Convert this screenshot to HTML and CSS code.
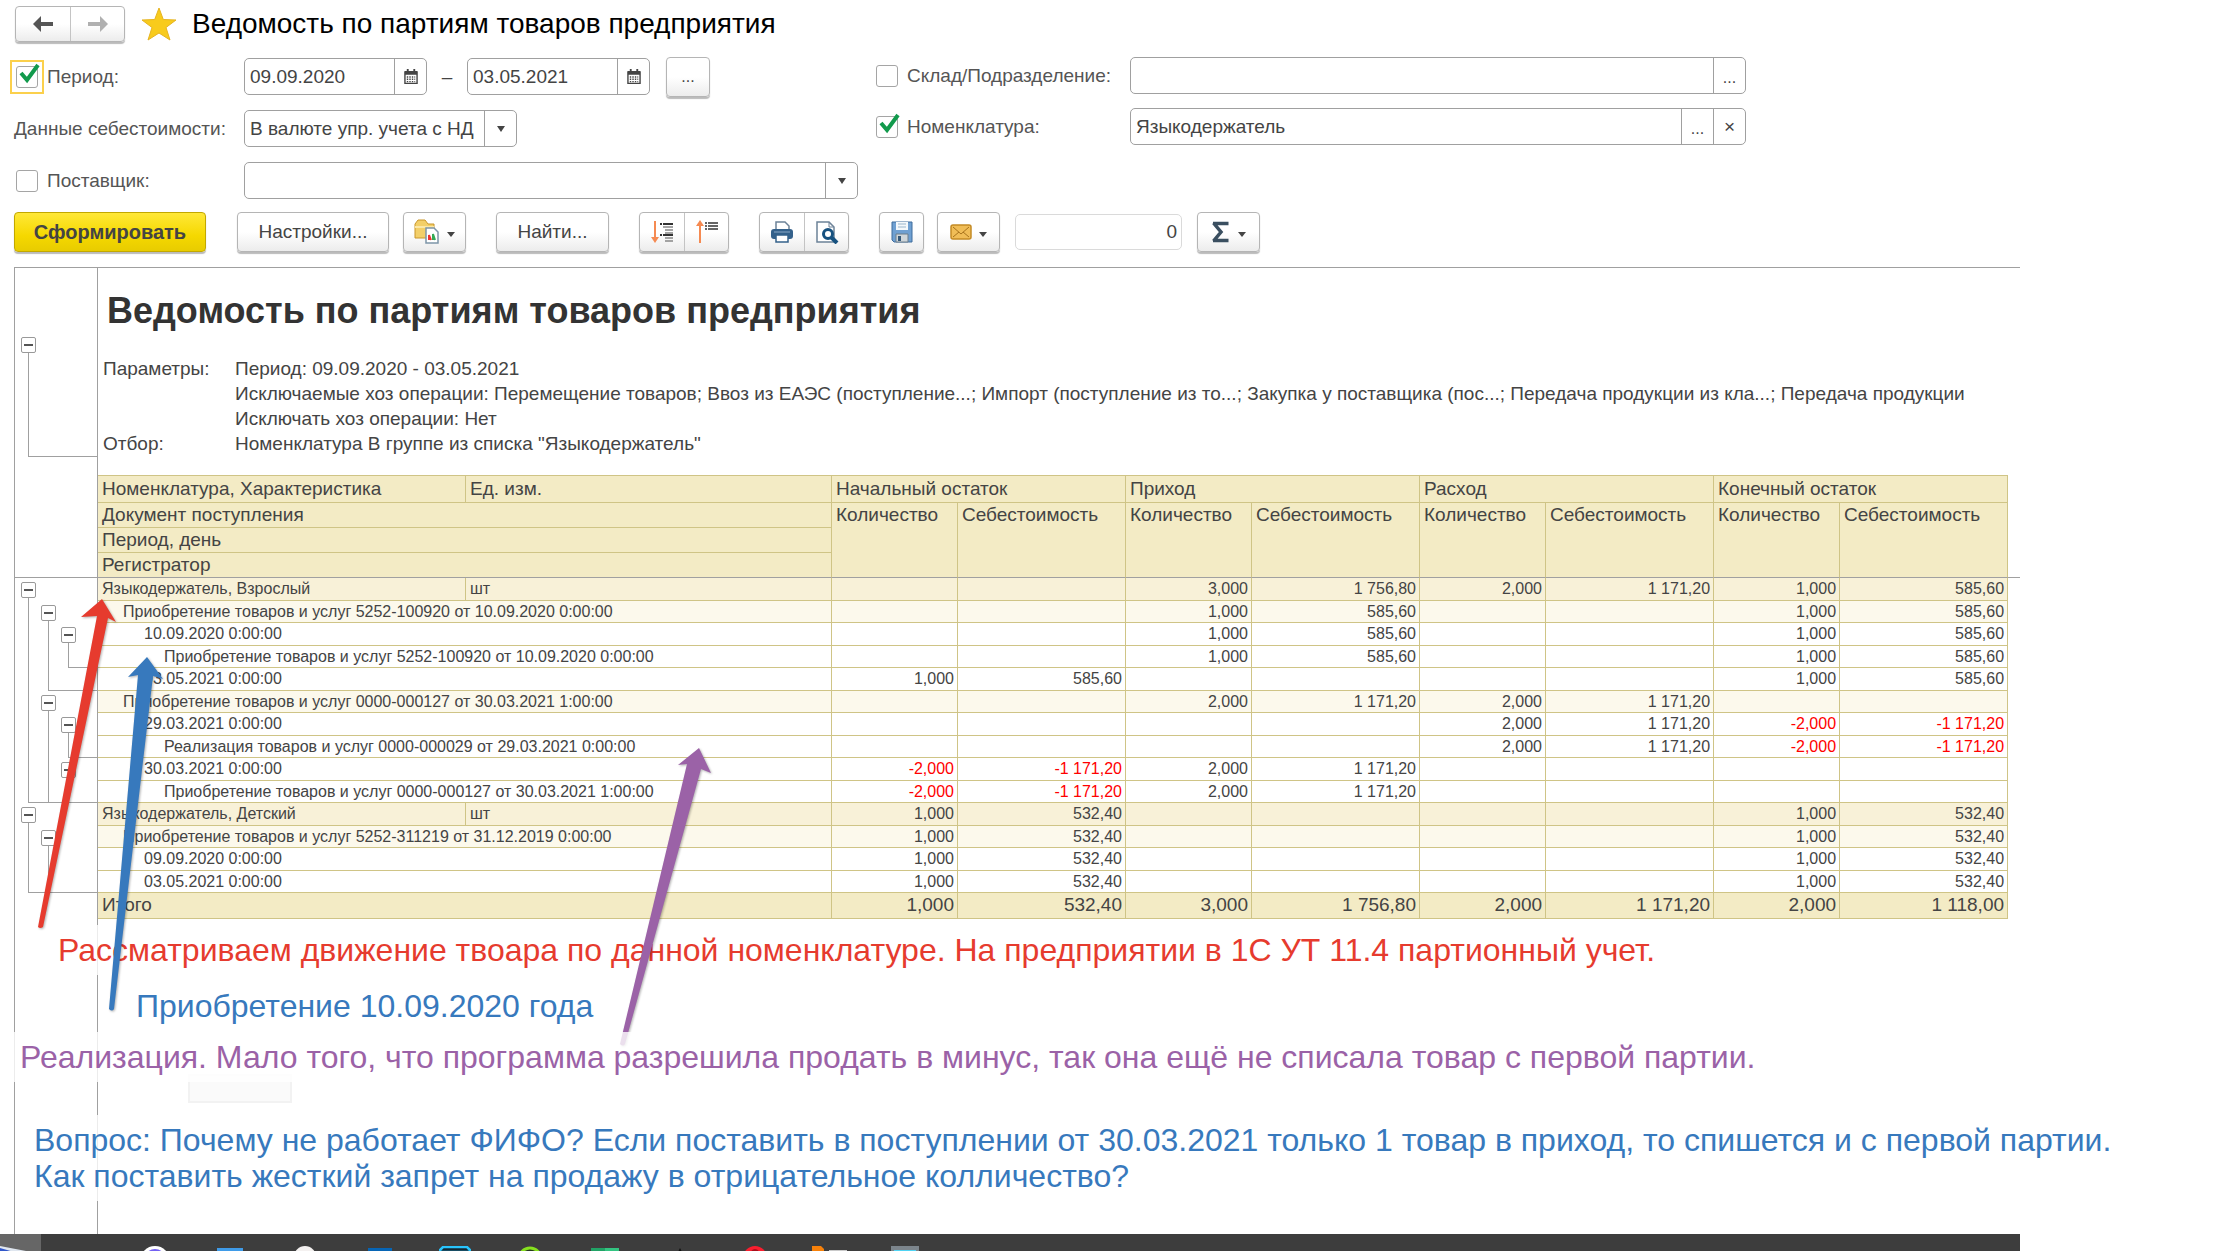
FILE: index.html
```html
<!DOCTYPE html>
<html lang="ru">
<head>
<meta charset="utf-8">
<title>Ведомость по партиям товаров предприятия</title>
<link rel="stylesheet" href="styles.css">
</head>
<body>
<main class="app">
  <header class="head">
    <div class="group">
      <button class="nav" type="button" aria-label="Назад"><svg width="22" height="18" viewBox="0 0 22 18"><path d="M1 9 9 1v6h12v4H9v6z" fill="#555"/></svg></button>
      <button class="nav" type="button" aria-label="Вперед"><svg width="22" height="18" viewBox="0 0 22 18"><path d="M21 9 13 1v6H1v4h12v6z" fill="#b0b0b0"/></svg></button>
    </div>
    <svg class="star" width="36" height="34" viewBox="0 0 36 34"><path d="M18 1 22.300 12.500 35 13 25 20.500 29 33 18 26 7 33 11 20.500 1 13 13.700 12.500z" fill="#f8cb1c" stroke="#e6b422"/></svg>
    <h1 class="title">Ведомость по партиям товаров предприятия</h1>
  </header>

  <form class="filters">
    <div class="col col-left">
      <div class="row">
        <span class="tick focus"><input type="checkbox" id="period" checked></span>
        <label class="lab lab-period" for="period">Период:</label>
        <span class="field date"><input type="text" aria-label="Начало периода" value="09.09.2020"><button type="button" class="part" aria-label="Календарь"><svg width="14" height="15" viewBox="0 0 15 16"><path d="M1 3h13v12.500H1z" fill="#fff" stroke="#444" stroke-width="1.500"/><path d="M1 2h13v4H1zM3 0h2v3H3zM10 0h2v3h-2z" fill="#444"/><path d="M3 8.500h9M3 11h9M3 13.500h9" stroke="#444" stroke-width="1.500" stroke-dasharray="1.500 1.200"/></svg></button></span>
        <span class="dash">–</span>
        <span class="field date"><input type="text" aria-label="Конец периода" value="03.05.2021"><button type="button" class="part" aria-label="Календарь"><svg width="14" height="15" viewBox="0 0 15 16"><path d="M1 3h13v12.500H1z" fill="#fff" stroke="#444" stroke-width="1.500"/><path d="M1 2h13v4H1zM3 0h2v3H3zM10 0h2v3h-2z" fill="#444"/><path d="M3 8.500h9M3 11h9M3 13.500h9" stroke="#444" stroke-width="1.500" stroke-dasharray="1.500 1.200"/></svg></button></span>
        <button class="btn more" type="button">...</button>
      </div>
      <div class="row">
        <label class="lab lab-wide" for="cost">Данные себестоимости:</label>
        <span class="field cost"><select id="cost"><option>В валюте упр. учета с НД</option></select><span class="part"><svg width="8" height="6" viewBox="0 0 8 6"><path d="M0 0h8L4 6z" fill="#444"/></svg></span></span>
      </div>
      <div class="row">
        <span class="tick"><input type="checkbox" id="supplier"></span>
        <label class="lab lab-period" for="supplier">Поставщик:</label>
        <span class="field supplier"><input type="text" aria-label="Поставщик"><button type="button" class="part" aria-label="Выбрать"><svg width="8" height="6" viewBox="0 0 8 6"><path d="M0 0h8L4 6z" fill="#444"/></svg></button></span>
      </div>
    </div>
    <div class="col">
      <div class="row">
        <span class="tick"><input type="checkbox" id="store"></span>
        <label class="lab lab-store" for="store">Склад/Подразделение:</label>
        <span class="field long"><input type="text" aria-label="Склад/Подразделение"><button type="button" class="part dots">...</button></span>
      </div>
      <div class="row">
        <span class="tick"><input type="checkbox" id="item" checked></span>
        <label class="lab lab-store" for="item">Номенклатура:</label>
        <span class="field long"><input type="text" aria-label="Номенклатура" value="Языкодержатель"><button type="button" class="part dots">...</button><button type="button" class="part">×</button></span>
      </div>
    </div>
  </form>

  <div class="toolbar">
    <button class="btn primary" type="button">Сформировать</button>
    <button class="btn settings" type="button">Настройки...</button>
    <button class="btn menu" type="button" aria-label="Варианты отчета"><svg width="26" height="26" viewBox="0 0 26 26"><path d="M1 5 4 1h7l3 4h6v14H1z" fill="#f3cf69" stroke="#c9962b"/><path d="M1 8h19" stroke="#fbe7a6" stroke-width="2"/><path d="M12 9h8l4 4v11H12z" fill="#fff" stroke="#7d95a8" stroke-width="1.500"/><path d="M15 21v-5l2 5" stroke="#e33" stroke-width="2" fill="none"/><path d="M19 21v-6l2 6" stroke="#3a5" stroke-width="2" fill="none"/></svg><svg width="8" height="5" viewBox="0 0 8 5"><path d="M0 0h8L4 5z" fill="#444"/></svg></button>
    <button class="btn find" type="button">Найти...</button>
    <div class="group pair">
      <button type="button" aria-label="Развернуть"><svg width="24" height="24" viewBox="0 0 24 24"><path d="M5 1v19" stroke="#f58a52" stroke-width="2"/><path d="M1 17h8l-4 6z" fill="#f58a52"/><g stroke="#333" stroke-width="2"><path d="M10 4h2M13 4h10M10 15h2M13 15h10"/><path d="M13 7h10M15 10h8M15 13h8M15 18h8M15 21h8" stroke="#888" stroke-width="1.500"/></g></svg></button>
      <button type="button" aria-label="Свернуть"><svg width="24" height="24" viewBox="0 0 24 24"><path d="M5 4v19" stroke="#f58a52" stroke-width="2"/><path d="M1 6h8L5 0z" fill="#f58a52"/><path d="M10 3h2M13 3h10M10 6h2M13 6h10M10 9h2M13 9h10" stroke="#333" stroke-width="1.500"/></svg></button>
    </div>
    <div class="group pair">
      <button type="button" aria-label="Печать"><svg width="24" height="24" viewBox="0 0 24 24"><path d="M6 10V2h9l4 4v4" fill="#fff" stroke="#6c8298" stroke-width="1.500"/><rect x="1" y="9" width="22" height="10" rx="3" fill="#34618b"/><path d="M4 12h16" stroke="#89a9c6"/><path d="M6 15h12v7H6z" fill="#fff" stroke="#34618b" stroke-width="1.500"/></svg></button>
      <button type="button" aria-label="Просмотр"><svg width="24" height="24" viewBox="0 0 24 24"><path d="M2 2h12l5 5v15H2z" fill="#fff" stroke="#6c8298" stroke-width="1.500"/><path d="M14 2v5h5" fill="none" stroke="#6c8298"/><circle cx="13" cy="14" r="4.500" fill="#fff" stroke="#16517f" stroke-width="3"/><path d="m16 17 6 6" stroke="#16517f" stroke-width="4"/></svg></button>
    </div>
    <button class="btn icon" type="button" aria-label="Сохранить"><svg width="22" height="22" viewBox="0 0 22 22"><path d="M1 1h20v20H3l-2-2z" fill="#6fa0d2" stroke="#3f6c9c"/><path d="M5 1h12v8H5z" fill="#f4f8fb"/><path d="M7 3h8M7 6h8" stroke="#9bb6cc"/><path d="M5 13h12v8H5z" fill="#cfd6da" stroke="#6d7f8d"/><path d="M7 15h3v5H7z" fill="#35597a"/></svg></button>
    <button class="btn menu" type="button" aria-label="Отправить"><svg width="22" height="16" viewBox="0 0 22 16"><rect x="1" y="1" width="20" height="14" rx="2" fill="#f0bd57" stroke="#c48a25" stroke-width="1.500"/><path d="m3 3 8 7 8-7M3 13l6-5M19 13l-6-5" fill="none" stroke="#a8731c"/></svg><svg width="8" height="5" viewBox="0 0 8 5"><path d="M0 0h8L4 5z" fill="#444"/></svg></button>
    <input class="sum" type="text" aria-label="Сумма" value="0">
    <button class="btn menu" type="button" aria-label="Функция"><svg width="20" height="22" viewBox="0 0 20 22"><path d="M2 2.500h15.500M2.500 2 10 11l-7.500 9M2 19.500h15.500" fill="none" stroke="#3a4f60" stroke-width="3.500"/></svg><svg width="8" height="5" viewBox="0 0 8 5"><path d="M0 0h8L4 5z" fill="#444"/></svg></button>
  </div>

  <section class="report">
    <div class="report-head">
      <div class="gutter"><button class="toggle" type="button" aria-label="Свернуть"></button><div class="bracket"></div></div>
      <div class="report-info">
        <h2 class="report-title">Ведомость по партиям товаров предприятия</h2>
        <dl class="params">
          <dt>Параметры:</dt><dd>Период: 09.09.2020 - 03.05.2021</dd>
          <dt></dt><dd>Исключаемые хоз операции: Перемещение товаров; Ввоз из ЕАЭС (поступление...; Импорт (поступление из то...; Закупка у поставщика (пос...; Передача продукции из кла...; Передача продукции</dd>
          <dt></dt><dd>Исключать хоз операции: Нет</dd>
          <dt>Отбор:</dt><dd>Номенклатура В группе из списка "Языкодержатель"</dd>
        </dl>
      </div>
    </div>

    <table class="grid">
      <colgroup><col class="c-tree"><col class="c-name"><col class="c-unit"><col class="c-qty"><col class="c-sum"><col class="c-qty"><col class="c-sum"><col class="c-qty"><col class="c-sum"><col class="c-qty"><col class="c-sum"><col></colgroup>
      <thead>
        <tr><td class="side" rowspan="4"></td><th>Номенклатура, Характеристика</th><th>Ед. изм.</th><th colspan="2">Начальный остаток</th><th colspan="2">Приход</th><th colspan="2">Расход</th><th colspan="2">Конечный остаток</th><td class="rest" rowspan="4"></td></tr>
        <tr><th colspan="2">Документ поступления</th><th rowspan="3">Количество</th><th rowspan="3">Себестоимость</th><th rowspan="3">Количество</th><th rowspan="3">Себестоимость</th><th rowspan="3">Количество</th><th rowspan="3">Себестоимость</th><th rowspan="3">Количество</th><th rowspan="3">Себестоимость</th></tr>
        <tr><th colspan="2">Период, день</th></tr>
        <tr><th colspan="2">Регистратор</th></tr>
      </thead>
      <tbody>
        <tr class="g0"><td class="side"><div class="tree"><i class="b"><button class="toggle" type="button" aria-label="Свернуть"></button></i></div></td><td>Языкодержатель, Взрослый</td><td>шт</td><td></td><td></td><td>3,000</td><td>1 756,80</td><td>2,000</td><td>1 171,20</td><td>1,000</td><td>585,60</td></tr>
        <tr class="g1"><td class="side"><div class="tree"><i class="l"></i><i class="b"><button class="toggle" type="button" aria-label="Свернуть"></button></i></div></td><td colspan="2">Приобретение товаров и услуг 5252-100920 от 10.09.2020 0:00:00</td><td></td><td></td><td>1,000</td><td>585,60</td><td></td><td></td><td>1,000</td><td>585,60</td></tr>
        <tr class="g2"><td class="side"><div class="tree"><i class="l"></i><i class="l"></i><i class="b"><button class="toggle" type="button" aria-label="Свернуть"></button></i></div></td><td colspan="2">10.09.2020 0:00:00</td><td></td><td></td><td>1,000</td><td>585,60</td><td></td><td></td><td>1,000</td><td>585,60</td></tr>
        <tr class="g3"><td class="side"><div class="tree"><i class="l"></i><i class="l"></i><i class="e"></i></div></td><td colspan="2">Приобретение товаров и услуг 5252-100920 от 10.09.2020 0:00:00</td><td></td><td></td><td>1,000</td><td>585,60</td><td></td><td></td><td>1,000</td><td>585,60</td></tr>
        <tr class="g2"><td class="side"><div class="tree"><i class="l"></i><i class="e"></i></div></td><td colspan="2">03.05.2021 0:00:00</td><td>1,000</td><td>585,60</td><td></td><td></td><td></td><td></td><td>1,000</td><td>585,60</td></tr>
        <tr class="g1"><td class="side"><div class="tree"><i class="l"></i><i class="b"><button class="toggle" type="button" aria-label="Свернуть"></button></i></div></td><td colspan="2">Приобретение товаров и услуг 0000-000127 от 30.03.2021 1:00:00</td><td></td><td></td><td>2,000</td><td>1 171,20</td><td>2,000</td><td>1 171,20</td><td></td><td></td></tr>
        <tr class="g2"><td class="side"><div class="tree"><i class="l"></i><i class="l"></i><i class="b"><button class="toggle" type="button" aria-label="Свернуть"></button></i></div></td><td colspan="2">29.03.2021 0:00:00</td><td></td><td></td><td></td><td></td><td>2,000</td><td>1 171,20</td><td class="neg">-2,000</td><td class="neg">-1 171,20</td></tr>
        <tr class="g3"><td class="side"><div class="tree"><i class="l"></i><i class="l"></i><i class="e"></i></div></td><td colspan="2">Реализация товаров и услуг 0000-000029 от 29.03.2021 0:00:00</td><td></td><td></td><td></td><td></td><td>2,000</td><td>1 171,20</td><td class="neg">-2,000</td><td class="neg">-1 171,20</td></tr>
        <tr class="g2"><td class="side"><div class="tree"><i class="l"></i><i class="l"></i><i class="b"><button class="toggle" type="button" aria-label="Свернуть"></button></i></div></td><td colspan="2">30.03.2021 0:00:00</td><td class="neg">-2,000</td><td class="neg">-1 171,20</td><td>2,000</td><td>1 171,20</td><td></td><td></td><td></td><td></td></tr>
        <tr class="g3"><td class="side"><div class="tree"><i class="e"></i><i class="e"></i><i class="e"></i></div></td><td colspan="2">Приобретение товаров и услуг 0000-000127 от 30.03.2021 1:00:00</td><td class="neg">-2,000</td><td class="neg">-1 171,20</td><td>2,000</td><td>1 171,20</td><td></td><td></td><td></td><td></td></tr>
        <tr class="g0"><td class="side"><div class="tree"><i class="b"><button class="toggle" type="button" aria-label="Свернуть"></button></i></div></td><td>Языкодержатель, Детский</td><td>шт</td><td>1,000</td><td>532,40</td><td></td><td></td><td></td><td></td><td>1,000</td><td>532,40</td></tr>
        <tr class="g1"><td class="side"><div class="tree"><i class="l"></i><i class="b"><button class="toggle" type="button" aria-label="Свернуть"></button></i></div></td><td colspan="2">Приобретение товаров и услуг 5252-311219 от 31.12.2019 0:00:00</td><td>1,000</td><td>532,40</td><td></td><td></td><td></td><td></td><td>1,000</td><td>532,40</td></tr>
        <tr class="g2"><td class="side"><div class="tree"><i class="l"></i><i class="l"></i></div></td><td colspan="2">09.09.2020 0:00:00</td><td>1,000</td><td>532,40</td><td></td><td></td><td></td><td></td><td>1,000</td><td>532,40</td></tr>
        <tr class="g2"><td class="side"><div class="tree"><i class="e"></i><i class="e"></i></div></td><td colspan="2">03.05.2021 0:00:00</td><td>1,000</td><td>532,40</td><td></td><td></td><td></td><td></td><td>1,000</td><td>532,40</td></tr>
      </tbody>
      <tfoot>
        <tr><td class="side"></td><td colspan="2">Итого</td><td>1,000</td><td>532,40</td><td>3,000</td><td>1 756,80</td><td>2,000</td><td>1 171,20</td><td>2,000</td><td>1 118,00</td></tr>
      </tfoot>
    </table>
    <div class="gutter tail"></div>
  </section>

  <footer class="taskbar">
    <span class="task active"><svg width="28" height="6" viewBox="0 0 28 6"><path d="M0 0 26 5v1H0z" fill="#dfe6ef"/><path d="M0 2 14 6H0z" fill="#3157c9"/></svg></span>
    <span class="task"><svg width="30" height="6" viewBox="0 0 30 6"><circle cx="15" cy="15" r="15" fill="#fff"/><circle cx="15" cy="14" r="11" fill="#7360f2"/></svg></span>
    <span class="task"><svg width="26" height="6" viewBox="0 0 26 6"><path d="M0 2h26v4H0z" fill="#3f9be8"/></svg></span>
    <span class="task"><svg width="22" height="6" viewBox="0 0 22 6"><circle cx="11" cy="11" r="11" fill="#f4f1f0"/></svg></span>
    <span class="task"><svg width="24" height="6" viewBox="0 0 24 6"><path d="M0 2h24v4H0z" fill="#0765b5"/></svg></span>
    <span class="task"><svg width="32" height="6" viewBox="0 0 32 6"><path d="M1 6V4l3-3h24l3 3v2z" fill="#132630" stroke="#28c3fb" stroke-width="2.500"/></svg></span>
    <span class="task"><svg width="26" height="6" viewBox="0 0 26 6"><circle cx="13" cy="13" r="11" fill="#26391a" stroke="#86e01e" stroke-width="3"/></svg></span>
    <span class="task"><svg width="28" height="6" viewBox="0 0 28 6"><path d="M0 2h14v4H0z" fill="#21a366"/><path d="M14 2h14v4H14z" fill="#33c481"/></svg></span>
    <span class="task"><svg width="8" height="6" viewBox="0 0 8 6"><path d="m4 2 2 4H2z" fill="#111"/></svg></span>
    <span class="task"><svg width="24" height="6" viewBox="0 0 24 6"><circle cx="12" cy="12" r="12" fill="#fa1e2f"/><ellipse cx="12" cy="12" rx="6" ry="9" fill="#a7101c"/></svg></span>
    <span class="task"><svg width="36" height="6" viewBox="0 0 36 6"><path d="M0 0h9l3 3v3H0z" fill="#f7810a"/><path d="M17 4h18v2H17z" fill="#c9c9c9"/></svg></span>
    <span class="task"><svg width="28" height="6" viewBox="0 0 28 6"><path d="M0 0h28v6H0z" fill="#7c858c"/><path d="M3 4h22v2H3z" fill="#4fd3f3"/></svg></span>
  </footer>
</main>

<div class="ghost"></div>
<p class="note note-red">Рассматриваем движение твоара по данной номенклатуре. На предприятии в 1С УТ 11.4 партионный учет.</p>
<p class="note note-buy">Приобретение 10.09.2020 года</p>
<svg class="arrows" width="730" height="1060" viewBox="0 0 730 1060">
  <path d="M102 599 116 622 108 618 43 927q-3 2-5 0L97 616 81 617z" fill="#e63b2e"/>
  <path d="M147 657 163 679 153 676 114 1009q-2 3-5 0L138 675 128 677z" fill="#3779bd"/>
  <path d="M699 748 711 773 701 769 625 1044q-2 3-5 0L687 764 678 765z" fill="#9b62a7"/>
</svg>
<p class="note note-sale">Реализация. Мало того, что программа разрешила продать в минус, так она ещё не списала товар с первой партии.</p>
<p class="note note-ask">Вопрос: Почему не работает ФИФО? Если поставить в поступлении от 30.03.2021 только 1 товар в приход, то спишется и с первой партии.<br>Как поставить жесткий запрет на продажу в отрицательное колличество?</p>
</body>
</html>
```
FILE: styles.css
```css
* { box-sizing: border-box; }
body { margin: 0; position: relative; background: #fff; color: #444; font: 19px/24px "Liberation Sans", Arial, sans-serif; }
h1, h2, p, dl, dd { margin: 0; }
button, input, select { font: inherit; color: inherit; margin: 0; padding: 0; border: 0; background: none; }
svg { display: block; flex: none; }

.app { margin-right: 194px; min-height: 100vh; display: flex; flex-direction: column; }

.head { display: flex; align-items: center; height: 48px; padding-left: 15px; }
.star { margin: 0 15px 0 16px; }
.title { color: #000; font-size: 28px; font-weight: 400; line-height: 32px; white-space: nowrap; }

.group, .btn { border: 1px solid #b5b5b5; border-radius: 4px; background: linear-gradient(#fff 50%, #ececec); box-shadow: 0 2px 1px #bbb; }
.group { display: flex; }
.group button { display: flex; align-items: center; justify-content: center; }
.group button + button { border-left: 1px solid #c4c4c4; }
.nav { width: 54px; height: 34px; }
.btn { display: flex; align-items: center; justify-content: center; height: 40px; }

.filters { display: flex; padding: 9px 0 13px; gap: 17px; }
.col { display: flex; flex-direction: column; gap: 14px; }
.col-left { width: 858px; padding-top: 1px; gap: 15px; }
.row { display: flex; align-items: center; height: 37px; white-space: nowrap; }
.col-left .row { padding-left: 10px; }
.tick { display: flex; width: 34px; height: 34px; align-items: center; justify-content: center; }
.col:last-child .tick { width: 23px; }
.focus { border: 2px solid #fbd04c; }
.tick input { appearance: none; position: relative; width: 22px; height: 22px; border: 1px solid #a5a5a5; border-radius: 3px; background: #fff; }
.tick input:checked::after { content: ""; position: absolute; left: 2px; top: -4px; width: 21px; height: 21px; background: url("data:image/svg+xml,%3Csvg xmlns='http://www.w3.org/2000/svg' viewBox='0 0 21 21'%3E%3Cpath d='M2 10l6 7L19 2' fill='none' stroke='%23129a4c' stroke-width='4'/%3E%3C/svg%3E"); }
.lab { color: #555; }
.lab-period { width: 200px; padding-left: 3px; }
.lab-wide { width: 234px; padding-left: 4px; }
.lab-store { width: 232px; padding-left: 9px; }
.field { display: flex; height: 37px; border: 1px solid #a0a0a0; border-radius: 5px; background: #fff; overflow: hidden; }
.field input, .field select { flex: 1; min-width: 0; padding-left: 5px; appearance: none; outline: 0; }
.part { display: flex; width: 32px; align-items: center; justify-content: center; border-left: 1px solid #a0a0a0; }
.dots { font-size: 16px; padding-top: 5px; }
.date { width: 183px; }
.dash { width: 40px; text-align: center; }
.cost { width: 273px; }
.supplier { width: 614px; }
.long { width: 616px; }
.more { width: 44px; margin-left: 16px; font-size: 16px; }

.toolbar { display: flex; align-items: center; height: 40px; padding-left: 14px; margin-bottom: 15px; white-space: nowrap; }
.primary { width: 192px; margin-right: 31px; border-color: #c2a800; background: linear-gradient(#ffe838, #f5d800 60%, #e8cc00); font-size: 20px; font-weight: 700; }
.settings { width: 152px; margin-right: 14px; }
.menu { width: 63px; gap: 7px; }
.menu svg + svg { margin-top: 5px; }
.find { width: 113px; margin: 0 30px; }
.pair { height: 40px; margin-right: 30px; }
.pair button { width: 44px; }
.icon { width: 45px; margin-right: 13px; }
.sum { width: 167px; height: 36px; margin: 0 15px; padding-right: 4px; border: 1px solid #dadada; border-radius: 5px; text-align: right; }

.report { flex: 1; display: flex; flex-direction: column; margin-left: 14px; border-top: 1px solid #a0a0a0; border-left: 1px solid #a0a0a0; }
.report-head { display: flex; height: 207px; }
.gutter { flex: none; width: 83px; border-right: 1px solid #a0a0a0; }
.report-head .gutter { padding: 69px 0 0 6px; }
.bracket { height: 104px; margin-left: 7px; border-left: 1px solid #a0a0a0; border-bottom: 1px solid #a0a0a0; }
.tail { flex: 1; }
.toggle { display: block; position: relative; width: 15px; height: 16px; border: 1px solid #999; border-radius: 2px; background: #fff; }
.toggle::before { content: ""; position: absolute; left: 2px; top: 6px; width: 9px; height: 2px; background: #555; }
.report-info { flex: 1; min-width: 0; padding: 22px 0 0 5px; }
.report-title { padding-left: 4px; color: #333; font-size: 36px; line-height: 42px; white-space: nowrap; }
.params { display: grid; grid-template-columns: 132px 1fr; margin-top: 24px; line-height: 25px; grid-auto-rows: 25px; }
.params dd { overflow: hidden; white-space: nowrap; }

.grid { width: 100%; table-layout: fixed; border-spacing: 0; }
.c-tree { width: 83px; }
.c-name { width: 368px; }
.c-unit { width: 366px; }
.c-qty { width: 126px; }
.c-sum { width: 168px; }
.grid th, .grid td { padding: 0 3px 0 4px; border: solid #cfc486; border-width: 0 1px 1px 0; text-align: left; vertical-align: top; font-weight: 400; white-space: nowrap; }
.grid thead th { height: 25px; background: #f3ebc5; }
.grid thead tr:first-child th { height: 28px; padding-top: 1px; border-top: 1px solid #cfc486; }
.grid thead tr:last-child th, .grid thead th[rowspan="3"], .grid thead td { border-bottom-color: #a0a0a0; }
.grid .side { padding: 0; border-right-color: #a0a0a0; border-bottom: 0; }
.grid thead .side { border-bottom: 1px solid #a0a0a0; }
.grid .rest { border-right: 0; }
.grid tbody { font-size: 16px; line-height: 21px; }
.grid tbody td { height: 23px; }
.grid tbody tr:nth-child(even) td { height: 22px; }
.grid tbody td:nth-child(n+3):not(:nth-child(3):nth-last-child(9)), .grid tfoot td:nth-child(n+3) { text-align: right; }
.g0 td { background: #f8f1d8; }
.g1 td { background: #fcf9ec; }
.grid tbody .side { background: #fff; }
.g1 td:nth-child(2) { padding-left: 25px; }
.g2 td:nth-child(2) { padding-left: 46px; }
.g3 td:nth-child(2) { padding-left: 66px; }
.grid tbody .neg { color: #f00; }
.grid tfoot td { height: 26px; background: #f3ebc5; }
.grid tfoot .side { background: #fff; }

.tree { position: relative; display: flex; height: 23px; padding-left: 6px; overflow: hidden; }
tr:nth-child(even) .tree { height: 22px; }
.tree i { flex: none; position: relative; width: 20px; }
.tree .toggle { margin-top: 4px; }
.tree .b::after, .tree .l::after, .tree .e::after { content: ""; position: absolute; left: 7px; top: 0; bottom: 0; border-left: 1px solid #a0a0a0; }
.tree .b::after { top: 20px; }
.tree .e::after { width: 90px; border-bottom: 1px solid #a0a0a0; }

.taskbar { display: flex; height: 17px; background: #3d3d3d; overflow: hidden; }
.task { display: flex; flex: none; width: 75px; padding-top: 12px; justify-content: center; }
.active { width: 41px; margin-right: 76px; background: #666; justify-content: flex-start; }

.note { position: absolute; padding: 7px 0 7px 8px; background: rgba(255, 255, 255, .8); font-size: 32px; line-height: 36px; white-space: nowrap; }
.note-red { left: 50px; top: 925px; color: #e63b2e; }
.note-buy { left: 128px; top: 981px; color: #3779bd; }
.note-sale { left: 12px; top: 1032px; color: #9b62a7; }
.note-ask { left: 26px; top: 1115px; color: #3779bd; }
.arrows { position: absolute; left: 0; top: 0; pointer-events: none; filter: drop-shadow(1px 1px 1px rgba(0, 0, 0, .3)); }
.ghost { position: absolute; left: 188px; top: 1074px; width: 104px; height: 29px; border: 2px solid #f2f2f2; background: #fafafa; }
```
